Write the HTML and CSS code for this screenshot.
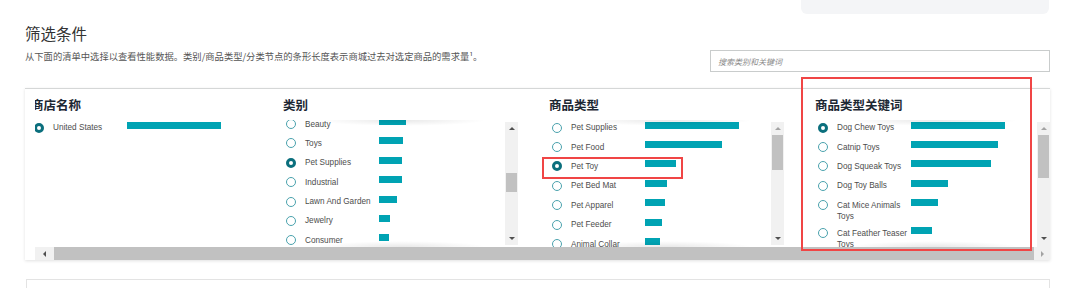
FILE: index.html
```html
<!DOCTYPE html>
<html lang="zh-CN">
<head>
    <meta charset="UTF-8">
    <meta name="viewport" content="width=device-width, initial-scale=1.0">
    <title>筛选条件</title>
    <link rel="stylesheet" href="styles.css">
</head>
<body>
    <div class="page">
        <div class="top-tab"></div>
        <h1 class="title">筛选条件</h1>
        <div class="intro">
            <p class="intro-text">从下面的清单中选择以查看性能数据。类别/商品类型/分类节点的条形长度表示商城过去对选定商品的需求量¹。</p>
            <input class="search" type="text" placeholder="搜索类别和关键词">
        </div>

        <div class="filter-panel">
            <div class="filter-scroll">
                <div class="filter-columns">
                    <!-- Store -->
                    <div class="filter-col col-first">
                        <h2>商店名称</h2>
                        <div class="list-box">
                            <div class="list-view">
                                <ul class="list">
                                    <li><span class="radio on"></span><span class="label">United States</span><span class="bar" style="width:94px"></span></li>
                                </ul>
                            </div>
                        </div>
                    </div>

                    <!-- Category -->
                    <div class="filter-col">
                        <h2>类别</h2>
                        <div class="list-box">
                            <div class="list-view fade">
                                <ul class="list scrolled">
                                    <li><span class="radio"></span><span class="label">Beauty</span><span class="bar" style="width:27px"></span></li>
                                    <li><span class="radio"></span><span class="label">Toys</span><span class="bar" style="width:24px"></span></li>
                                    <li><span class="radio on"></span><span class="label">Pet Supplies</span><span class="bar" style="width:23px"></span></li>
                                    <li><span class="radio"></span><span class="label">Industrial</span><span class="bar" style="width:23px"></span></li>
                                    <li><span class="radio"></span><span class="label">Lawn And Garden</span><span class="bar" style="width:18px"></span></li>
                                    <li><span class="radio"></span><span class="label">Jewelry</span><span class="bar" style="width:11px"></span></li>
                                    <li><span class="radio"></span><span class="label">Consumer</span><span class="bar" style="width:10px"></span></li>
                                    <li><span class="radio"></span><span class="label">Home</span><span class="bar" style="width:8px"></span></li>
                                </ul>
                            </div>
                            <div class="vscroll">
                                <span class="arrow up"></span>
                                <div class="track"><span class="thumb" style="margin-top:38px;height:19px"></span></div>
                                <span class="arrow down"></span>
                            </div>
                        </div>
                    </div>

                    <!-- Product type -->
                    <div class="filter-col">
                        <h2>商品类型</h2>
                        <div class="list-box">
                            <div class="list-view fade">
                                <ul class="list">
                                    <li><span class="radio"></span><span class="label">Pet Supplies</span><span class="bar" style="width:94px"></span></li>
                                    <li><span class="radio"></span><span class="label">Pet Food</span><span class="bar" style="width:77px"></span></li>
                                    <li><span class="radio on"></span><span class="label">Pet Toy</span><span class="bar" style="width:31px"></span></li>
                                    <li><span class="radio"></span><span class="label">Pet Bed Mat</span><span class="bar" style="width:22px"></span></li>
                                    <li><span class="radio"></span><span class="label">Pet Apparel</span><span class="bar" style="width:20px"></span></li>
                                    <li><span class="radio"></span><span class="label">Pet Feeder</span><span class="bar" style="width:17px"></span></li>
                                    <li><span class="radio"></span><span class="label">Animal Collar</span><span class="bar" style="width:15px"></span></li>
                                    <li><span class="radio"></span><span class="label">Pet Grooming</span><span class="bar" style="width:12px"></span></li>
                                </ul>
                            </div>
                            <div class="vscroll">
                                <span class="arrow up off"></span>
                                <div class="track"><span class="thumb" style="height:35px"></span></div>
                                <span class="arrow down"></span>
                            </div>
                        </div>
                    </div>

                    <!-- Product type keywords -->
                    <div class="filter-col col-last">
                        <h2>商品类型关键词</h2>
                        <div class="list-box">
                            <div class="list-view fade">
                                <ul class="list">
                                    <li><span class="radio on"></span><span class="label">Dog Chew Toys</span><span class="bar" style="width:94px"></span></li>
                                    <li><span class="radio"></span><span class="label">Catnip Toys</span><span class="bar" style="width:87px"></span></li>
                                    <li><span class="radio"></span><span class="label">Dog Squeak Toys</span><span class="bar" style="width:80px"></span></li>
                                    <li><span class="radio"></span><span class="label">Dog Toy Balls</span><span class="bar" style="width:37px"></span></li>
                                    <li><span class="radio"></span><span class="label">Cat Mice Animals Toys</span><span class="bar" style="width:27px"></span></li>
                                    <li><span class="radio"></span><span class="label">Cat Feather Teaser Toys</span><span class="bar" style="width:21px"></span></li>
                                    <li><span class="radio"></span><span class="label">Dog Rope Toys</span><span class="bar" style="width:18px"></span></li>
                                </ul>
                            </div>
                            <div class="vscroll tall">
                                <span class="arrow up off"></span>
                                <div class="track"><span class="thumb" style="height:43px"></span></div>
                                <span class="arrow down"></span>
                            </div>
                        </div>
                    </div>
                </div>

                <div class="hscroll">
                    <span class="hs-btn"><span class="arrow-left"></span></span>
                    <span class="hs-thumb"></span>
                    <span class="hs-btn end"><span class="arrow-right"></span></span>
                </div>
            </div>

            <!-- highlight marks -->
            <div class="mark mark-row"></div>
            <div class="mark mark-col"></div>
        </div>

        <div class="results"></div>
    </div>
</body>
</html>
```

FILE: styles.css
```css
/* General */
body {
    margin: 0;
    font-family: "Liberation Sans", "Noto Sans CJK SC", sans-serif;
    background-color: #fff;
    color: #333;
    overflow: hidden;
}

.page {
    width: 1025px;
    margin-left: 25px;
}

.top-tab {
    margin-left: 776px;
    width: 248px;
    height: 14px;
    background-color: #f4f5f7;
    border-radius: 0 0 6px 6px;
}

.title {
    margin: 8px 0 0;
    font-family: "Noto Sans CJK SC", sans-serif;
    font-size: 15.5px;
    font-weight: normal;
    line-height: 22px;
    color: #333;
}

/* Intro row */
.intro {
    display: flex;
    justify-content: space-between;
    align-items: flex-start;
    margin-top: 6px;
}

.intro-text {
    margin: 0;
    font-family: "Noto Sans CJK SC", sans-serif;
    font-size: 9.3px;
    line-height: 12px;
    color: #555;
}

.search {
    width: 340px;
    height: 22px;
    box-sizing: border-box;
    border: 1px solid #c9cccc;
    padding: 0 7px;
    font-family: "Noto Sans CJK SC", sans-serif;
    font-size: 8px;
    font-style: italic;
    outline: none;
}

.search::placeholder {
    color: #8a8a8a;
}

/* Filter panel */
.filter-panel {
    position: relative;
    margin-top: 16px;
    border-top: 1px solid #d5d7d7;
    padding-top: 8px;
    background-color: #fff;
    box-shadow: 0 1px 3px rgba(0, 0, 0, 0.12);
}

.filter-scroll {
    margin-left: 10px;
    overflow: hidden;
}

.filter-columns {
    display: flex;
    margin-left: -4px;
}

.filter-col {
    flex: none;
    width: 266px;
}

.filter-col.col-first {
    width: 252px;
}

.filter-col.col-last {
    width: 235px;
}

.filter-col h2 {
    margin: 0 0 7px;
    font-family: "Noto Sans CJK SC", sans-serif;
    font-size: 12.5px;
    font-weight: bold;
    line-height: 16px;
    color: #1c2733;
    white-space: nowrap;
}

.list-box {
    display: flex;
    height: 127px;
}

.list-view {
    position: relative;
    width: 222px;
    overflow: hidden;
}

.list-view.fade::before,
.list-view.fade::after {
    content: "";
    position: absolute;
    left: 15%;
    right: 8%;
    height: 6px;
    z-index: 1;
}

.list-view.fade::before {
    top: 0;
    background: radial-gradient(ellipse at top, rgba(0, 0, 0, 0.09), rgba(0, 0, 0, 0) 70%);
}

.list-view.fade::after {
    bottom: 0;
    background: radial-gradient(ellipse at bottom, rgba(0, 0, 0, 0.09), rgba(0, 0, 0, 0) 70%);
}

.list {
    list-style: none;
    margin: -2px 0 0;
    padding: 0;
}

.list.scrolled {
    margin-top: -5.7px;
}

.list li {
    display: flex;
    align-items: flex-start;
    min-height: 19.4px;
    box-sizing: border-box;
    padding: 4.2px 0 1.8px 3px;
    font-size: 8.2px;
    line-height: 11px;
}

.radio {
    flex: none;
    width: 10px;
    height: 10px;
    box-sizing: border-box;
    margin-top: 0.5px;
    border: 1.3px solid #4aa2ad;
    border-radius: 50%;
}

.radio.on {
    border: 3px solid #0b6f7d;
}

.label {
    flex: none;
    width: 72px;
    margin-left: 9px;
    color: #4d4d4d;
}

.bar {
    flex: none;
    height: 7px;
    margin: -0.5px 0 0 2px;
    background-color: #00a3b3;
}

/* Vertical scrollbars */
.vscroll {
    display: flex;
    flex-direction: column;
    flex: none;
    width: 13px;
    height: 123px;
    margin-top: 2px;
    background-color: #f1f1f1;
}

.vscroll.tall {
    height: 138px;
}

.vscroll .track {
    flex: 1;
    display: flex;
    flex-direction: column;
}

.vscroll .thumb {
    display: block;
    margin: 0 1px;
    background-color: #c1c1c1;
}

.arrow {
    display: flex;
    justify-content: center;
    align-items: center;
    height: 13px;
}

.vscroll.tall .arrow.down {
    margin-bottom: 15px;
}

.arrow::before {
    content: "";
    border-left: 3px solid transparent;
    border-right: 3px solid transparent;
}

.arrow.up::before {
    border-bottom: 3px solid #505050;
}

.arrow.up.off::before {
    border-bottom-color: #a3a3a3;
}

.arrow.down::before {
    border-top: 3px solid #505050;
}

/* Horizontal scrollbar */
.hscroll {
    display: flex;
    height: 13px;
    background-color: #f1f1f1;
}

.hs-btn {
    display: flex;
    justify-content: center;
    align-items: center;
    width: 18px;
    flex: none;
}

.hs-btn.end {
    width: 15px;
}

.arrow-left {
    border-top: 3px solid transparent;
    border-bottom: 3px solid transparent;
    border-right: 3px solid #505050;
}

.arrow-right {
    border-top: 3px solid transparent;
    border-bottom: 3px solid transparent;
    border-left: 3px solid #a3a3a3;
}

.hs-thumb {
    flex: 1;
    margin: 0 1px;
    background-color: #c1c1c1;
}

/* Highlight marks */
.mark {
    position: absolute;
    box-sizing: border-box;
    border: 2px solid #f04545;
}

.mark-row {
    left: 517px;
    top: 68px;
    width: 141px;
    height: 22px;
}

.mark-col {
    left: 776px;
    top: -12px;
    width: 231px;
    height: 174px;
}

/* Results box below */
.results {
    margin: 19px 0 0 1px;
    height: 30px;
    border: 1px solid #e3e3e3;
    border-bottom: none;
}
```
